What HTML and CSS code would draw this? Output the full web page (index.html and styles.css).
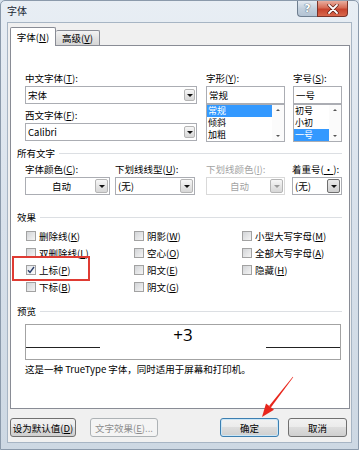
FILE: index.html
```html
<!DOCTYPE html>
<html>
<head>
  <meta charset="UTF-8" />
  <title>字体</title>
  <link rel="stylesheet" href="styles.css">
</head>
<body>
  <div class="window">
    <div class="titlebar">
      <span class="title">字体</span>
      <div class="caption">
        <span class="cap cap-help">?</span>
        <span class="cap cap-close">
          <svg width="12" height="10" viewBox="0 0 12 10">
            <path d="M2 1 L10 9 M10 1 L2 9" stroke="#5a1b12" stroke-width="3.2" stroke-linecap="round"/>
            <path d="M2 1 L10 9 M10 1 L2 9" stroke="#fff" stroke-width="1.8" stroke-linecap="round"/>
          </svg>
        </span>
      </div>
    </div>

    <div class="client">
      <div class="tabs">
        <span class="tab active">字体(<u>N</u>)</span>
        <span class="tab">高级(<u>V</u>)</span>
      </div>

      <div class="panel">
        <!-- font face / style / size -->
        <div class="font-row">
          <div class="col-a">
            <label>中文字体(<u>T</u>):</label>
            <div class="combo"><span>宋体</span><i class="drop small"></i></div>
            <label class="lbl2">西文字体(<u>F</u>):</label>
            <div class="combo"><span>Calibri</span><i class="drop small"></i></div>
          </div>
          <div class="col-b">
            <label>字形(<u>Y</u>):</label>
            <div class="edit">常规</div>
            <div class="listbox">
              <ul>
                <li class="sel">常规</li>
                <li>倾斜</li>
                <li>加粗</li>
              </ul>
              <div class="vscroll"><i class="up"></i><i class="down"></i></div>
            </div>
          </div>
          <div class="col-c">
            <label>字号(<u>S</u>):</label>
            <div class="edit">一号</div>
            <div class="listbox">
              <ul>
                <li>初号</li>
                <li>小初</li>
                <li class="sel">一号</li>
              </ul>
              <div class="vscroll"><i class="up"></i><i class="down"></i></div>
            </div>
          </div>
        </div>

        <div class="group-title">所有文字</div>
        <div class="combo-row">
          <div class="c1">
            <label>字体颜色(<u>C</u>):</label>
            <div class="combo center"><span>自动</span><i class="drop"></i></div>
          </div>
          <div class="c2">
            <label>下划线线型(<u>U</u>):</label>
            <div class="combo"><span>(无)</span><i class="drop"></i></div>
          </div>
          <div class="c3">
            <label class="disabled">下划线颜色(<u>I</u>):</label>
            <div class="combo center off"><span>自动</span><i class="drop"></i></div>
          </div>
          <div class="c4">
            <label>着重号(<u>·</u>):</label>
            <div class="combo"><span>(无)</span><i class="drop dark"></i></div>
          </div>
        </div>

        <div class="group-title">效果</div>
        <div class="effects">
          <div class="chk"><span class="cb"></span>删除线(<u>K</u>)</div>
          <div class="chk"><span class="cb"></span>阴影(<u>W</u>)</div>
          <div class="chk"><span class="cb"></span>小型大写字母(<u>M</u>)</div>
          <div class="chk"><span class="cb"></span>双删除线(<u>L</u>)</div>
          <div class="chk"><span class="cb"></span>空心(<u>O</u>)</div>
          <div class="chk"><span class="cb"></span>全部大写字母(<u>A</u>)</div>
          <div class="chk marked">
            <span class="cb">
              <svg width="8" height="8" viewBox="0 0 8 8"><path d="M1 4.2 L3 6.5 L7 1" fill="none" stroke="#2b3f6b" stroke-width="1.4"/></svg>
            </span>上标(<u>P</u>)
            <span class="mark"></span>
          </div>
          <div class="chk"><span class="cb"></span>阳文(<u>E</u>)</div>
          <div class="chk"><span class="cb"></span>隐藏(<u>H</u>)</div>
          <div class="chk"><span class="cb"></span>下标(<u>B</u>)</div>
          <div class="chk"><span class="cb"></span>阴文(<u>G</u>)</div>
        </div>

        <div class="group-title">预览</div>
        <div class="preview">
          <span class="base"></span>
          <span class="sample">+3</span>
          <span class="base"></span>
        </div>
        <p class="note">这是一种 TrueType 字体，同时适用于屏幕和打印机。</p>
      </div>

      <div class="buttons">
        <span class="btn">设为默认值(<u>D</u>)</span>
        <span class="btn off">文字效果(<u>E</u>)...</span>
        <span class="btn default">确定</span>
        <span class="btn">取消</span>
      </div>
    </div>

    <!-- red annotation arrow -->
    <svg class="arrow" width="45" height="50" viewBox="0 0 45 50">
      <polygon points="38.2,5.2 37.8,4.8 14.1,34 15.9,35.4" fill="#e8261c"/>
      <polygon points="7,45 19,37.8 11,31.6" fill="#e8261c"/>
    </svg>
  </div>
</body>
</html>
```

FILE: styles.css
```css
* {
  box-sizing: border-box;
}

html, body {
  margin: 0;
  background: #d6e0ea;
}

body {
  font-family: "Noto Sans CJK SC", "Noto Sans", sans-serif;
  font-size: 9.5px;
  color: #000;
}

u {
  text-decoration: underline;
}

.window {
  position: relative;
  width: 359px;
  height: 450px;
  border: 1px solid #8b9aab;
  border-radius: 5px 5px 0 0;
  background: linear-gradient(#e8eef4, #d8e1eb 50%, #cdd8e3);
  display: flex;
  flex-direction: column;
}

/* title bar */
.titlebar {
  height: 21px;
  display: flex;
  align-items: flex-start;
}

.title {
  padding-left: 6px;
  line-height: 20px;
  font-size: 10px;
  color: #1b2733;
}

.caption {
  margin-left: auto;
  margin-right: 10px;
  display: flex;
}

.cap {
  height: 16px;
  border: 1px solid #6e7e8f;
  border-top: none;
}

.cap-help {
  width: 20px;
  border-right: none;
  border-radius: 0 0 0 4px;
  background: linear-gradient(#e4eaf1, #c3d0dd 50%, #b3c3d3);
  color: #fff;
  font-family: "DejaVu Sans", sans-serif;
  font-weight: bold;
  font-size: 11px;
  line-height: 15px;
  text-align: center;
  text-shadow: 0 0 1px #4c5b6b, 0 0 1px #4c5b6b;
}

.cap-close {
  width: 31px;
  border-color: #7b3329;
  border-radius: 0 0 4px 0;
  background: linear-gradient(#e9ae9f, #d66b55 45%, #c7432d 55%, #d8684c);
  display: flex;
  align-items: center;
  justify-content: center;
}

/* client area */
.client {
  flex: 1;
  margin: 0 6px 6px;
  border: 1px solid #a7b5c4;
  background: #f0f0f0;
  padding: 4px 1px 0 2px;
  display: flex;
  flex-direction: column;
}

.tabs {
  display: flex;
  align-items: flex-end;
  height: 18px;
}

.tab {
  border: 1px solid #898c95;
  border-bottom: none;
  text-align: center;
  border-radius: 2px 2px 0 0;
}

.tab.active {
  position: relative;
  z-index: 1;
  width: 46px;
  height: 19px;
  margin-bottom: -1px;
  background: #fff;
  line-height: 19px;
}

.tab:not(.active) {
  width: 44px;
  height: 15px;
  line-height: 15px;
  border-left: none;
  background: linear-gradient(#f3f3f3, #e3e3e3 50%, #d6d6d6);
}

.panel {
  height: 364px;
  background: #fff;
  border: 1px solid #898c95;
  padding: 25px 7px 0 6px;
}

label {
  display: block;
  height: 14px;
  line-height: 14px;
  margin-bottom: 1px;
  white-space: nowrap;
}

label.disabled {
  color: #a3a3a3;
}

/* font face row */
.font-row {
  display: flex;
  margin-left: 8px;
}

.col-a {
  width: 172px;
}

.col-a .lbl2 {
  margin-top: 4px;
}

.col-b {
  width: 79px;
  margin-left: 9px;
}

.col-c {
  width: 49px;
  margin-left: 8px;
}

.combo {
  display: flex;
  align-items: center;
  height: 18px;
  border: 1px solid #abadb3;
  background: #fff;
  padding-left: 2px;
  white-space: nowrap;
}

.combo.center span {
  flex: 1;
  text-align: center;
}

.combo.off {
  border-color: #d9d9d9;
  color: #a3a3a3;
}

.drop {
  margin-left: auto;
  margin-right: 1px;
  width: 13px;
  height: 14px;
  border: 1px solid #b5b5b5;
  border-radius: 2px;
  background: linear-gradient(#f7f7f7, #e6e6e6 50%, #d7d7d7);
  display: flex;
  align-items: center;
  justify-content: center;
  flex-shrink: 0;
}

.drop::after {
  content: "";
  border-left: 3px solid transparent;
  border-right: 3px solid transparent;
  border-top: 3px solid #111;
}

.drop.small {
  width: 11px;
  height: 12px;
}

.drop.dark {
  border-color: #6f6f6f;
  background: linear-gradient(#eaeaea, #cfcfcf);
}

.combo.off .drop::after {
  border-top-color: #9a9a9a;
}

.edit {
  height: 18px;
  border: 1px solid #abadb3;
  padding-left: 2px;
  line-height: 16px;
}

.listbox {
  display: flex;
  height: 38px;
  border: 1px solid #abadb3;
}

.listbox ul {
  flex: 1;
  margin: 0;
  padding: 0;
  list-style: none;
}

.listbox li {
  height: 12px;
  line-height: 12px;
  padding-left: 1px;
  font-size: 9px;
  overflow: hidden;
}

.listbox li.sel {
  background: #3399ff;
  color: #fff;
}

.vscroll {
  width: 12px;
  display: flex;
  flex-direction: column;
  justify-content: space-between;
  align-items: center;
  padding: 4px 0;
  background: #fbfbfb;
}

.vscroll i {
  border-left: 2px solid transparent;
  border-right: 2px solid transparent;
}

.vscroll .up {
  border-bottom: 2px solid #555;
}

.vscroll .down {
  border-top: 2px solid #555;
}

/* group separators */
.group-title {
  display: flex;
  align-items: center;
  height: 14px;
  margin-top: 4px;
  white-space: nowrap;
}

.group-title::after {
  content: "";
  flex: 1;
  margin-left: 4px;
  border-top: 1px solid #dcdfe3;
}

.combo-row {
  display: flex;
  margin: 2px 0 0 8px;
}

.c1 { width: 85px; }
.c2 { width: 80px; margin-left: 5px; }
.c3 { width: 79px; margin-left: 11px; }
.c4 { width: 50px; margin-left: 7px; }

.combo-row + .group-title {
  margin-top: 15px;
}

/* effects */
.effects {
  display: grid;
  grid-template-columns: 108px 108px auto;
  grid-auto-rows: 17px;
  margin-top: 3px;
  padding-left: 9px;
}

.chk {
  position: relative;
  display: flex;
  align-items: center;
  white-space: nowrap;
}

.cb {
  width: 10px;
  height: 10px;
  margin-right: 3px;
  border: 1px solid #a2a2a2;
  background: linear-gradient(135deg, #d2d4d7, #f4f4f4);
  display: flex;
  align-items: center;
  justify-content: center;
}

.marked .cb {
  background: linear-gradient(135deg, #e3e6ea, #fbfbfb);
}

.mark {
  position: absolute;
  left: -14px;
  top: -5px;
  width: 78px;
  height: 25px;
  border: 2px solid #df3b33;
}

.effects + .group-title {
  margin-top: 9px;
}

/* preview */
.preview {
  display: flex;
  justify-content: space-between;
  align-items: flex-start;
  width: 316px;
  height: 36px;
  margin: 6px 0 0 8px;
  border: 1px solid #a3a3a3;
}

.preview .base {
  width: 74px;
  height: 1px;
  margin-top: 22px;
  background: #222;
}

.preview .sample {
  font-family: "Open Sans", sans-serif;
  font-size: 17px;
  line-height: 20px;
}

.note {
  margin: 2px 0 0 8px;
  line-height: 14px;
  white-space: nowrap;
}

/* dialog buttons */
.buttons {
  display: flex;
  margin-top: 9px;
  margin-right: 3px;
}

.btn {
  height: 19px;
  border: 1px solid #707070;
  border-radius: 3px;
  background: linear-gradient(#f2f2f2, #ebebeb 49%, #dddddd 50%, #cfcfcf);
  display: flex;
  align-items: center;
  justify-content: center;
  white-space: nowrap;
}

.btn:nth-child(1) { width: 66px; }
.btn:nth-child(2) { width: 68px; margin-left: 14px; }
.btn:nth-child(3) { width: 59px; margin-left: auto; }
.btn:nth-child(4) { width: 59px; margin-left: 9px; }

.btn.off {
  border-color: #adb2b5;
  background: #f4f4f4;
  color: #8d8d8d;
}

.btn.default {
  border-color: #3c7fb1;
  box-shadow: inset 0 0 0 1px #cbe6f6;
}

.arrow {
  position: absolute;
  left: 254px;
  top: 371px;
}
```
